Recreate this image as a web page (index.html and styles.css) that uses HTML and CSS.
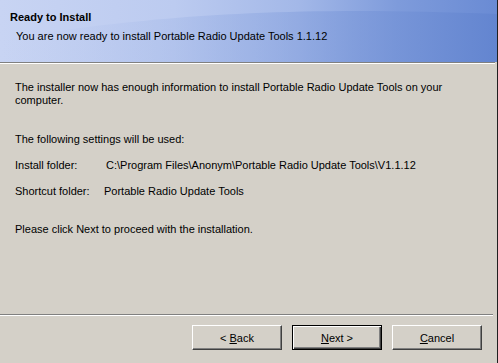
FILE: index.html
```html
<!DOCTYPE html>
<html>
<head>
<meta charset="utf-8">
<link rel="stylesheet" href="styles.css">
</head>
<body>
<div class="window">
  <header class="head">
    <svg class="wave" viewBox="0 0 497 62" preserveAspectRatio="none" aria-hidden="true">
      <defs>
        <linearGradient id="lower" x1="0" y1="0" x2="1" y2="0">
          <stop offset="0" stop-color="#b9c9ef" stop-opacity="0"/>
          <stop offset="0.55" stop-color="#8aa4df" stop-opacity="0.5"/>
          <stop offset="1" stop-color="#6385d0"/>
        </linearGradient>
      </defs>
      <path d="M0 62 L0 40 C120 20 260 4 497 14 L497 62 Z" fill="url(#lower)"/>
    </svg>
    <div class="title">Ready to Install</div>
    <div class="subtitle">You are now ready to install Portable Radio Update Tools 1.1.12</div>
  </header>
  <div class="rule"></div>
  <main class="content">
    <p class="para">The installer now has enough information to install Portable Radio Update Tools on your computer.</p>
    <p class="para settings">The following settings will be used:</p>
    <div class="row"><span class="label">Install folder:</span><span class="value install">C:\Program Files\Anonym\Portable Radio Update Tools\V1.1.12</span></div>
    <div class="row"><span class="label">Shortcut folder:</span><span class="value">Portable Radio Update Tools</span></div>
    <p class="para final">Please click Next to proceed with the installation.</p>
  </main>
  <div class="rule bottom"></div>
  <footer class="buttons">
    <button class="btn">&lt; <u>B</u>ack</button>
    <button class="btn default"><u>N</u>ext &gt;</button>
    <button class="btn"><u>C</u>ancel</button>
  </footer>
</div>
</body>
</html>
```
FILE: styles.css
```css
html, body {
  margin: 0;
  padding: 0;
  width: 498px;
  height: 363px;
  overflow: hidden;
  background: #d4d0c8;
}
body {
  font-family: "Liberation Sans", Arial, sans-serif;
  font-size: 11px;
  color: #000;
}
.window {
  width: 497px;
  height: 363px;
  border-right: 1px solid #202020;
  display: flex;
  flex-direction: column;
  background: #d4d0c8;
}
.head {
  position: relative;
  height: 62px;
  box-sizing: border-box;
  padding-top: 11px;
  background: linear-gradient(to right, #c8d4f3 0%, #bccbf0 35%, #a3b8e8 60%, #7e9bdb 80%, #6a8bd4 100%);
  overflow: hidden;
}
.wave {
  position: absolute;
  left: 0;
  top: 0;
  width: 100%;
  height: 100%;
}
.title, .subtitle {
  position: relative;
  line-height: 13px;
}
.title {
  font-weight: bold;
  padding-left: 10px;
}
.subtitle {
  margin-top: 6px;
  padding-left: 16px;
}
.rule {
  height: 1px;
  background: #808080;
  border-bottom: 1px solid #ffffff;
  margin-right: 2px;
}
.rule.bottom {
  margin-right: 4px;
}
.content {
  flex: 1;
  padding: 17px 0 0 15px;
  line-height: 13px;
}
.para {
  margin: 0;
  width: 440px;
}
.settings {
  margin-top: 26px;
}
.row {
  display: flex;
  margin-top: 13px;
  white-space: nowrap;
}
.label {
  width: 89px;
}
.install {
  padding-left: 2px;
}
.final {
  margin-top: 25px;
}
.buttons {
  height: 47px;
  box-sizing: border-box;
  display: flex;
  justify-content: flex-end;
  gap: 10px;
  padding: 9px 15px 0 0;
}
.btn {
  width: 90px;
  height: 25px;
  box-sizing: border-box;
  font-family: inherit;
  font-size: 11px;
  color: #000;
  background: #d4d0c8;
  border: 1px solid;
  border-color: #ffffff #404040 #404040 #ffffff;
  box-shadow: inset -1px -1px 0 #808080;
  padding: 0;
}
.btn.default {
  border: 1px solid #000;
  box-shadow: inset 1px 1px 0 #ffffff, inset -1px -1px 0 #404040, inset -2px -2px 0 #808080;
}
.btn u {
  text-decoration: underline;
}
```
